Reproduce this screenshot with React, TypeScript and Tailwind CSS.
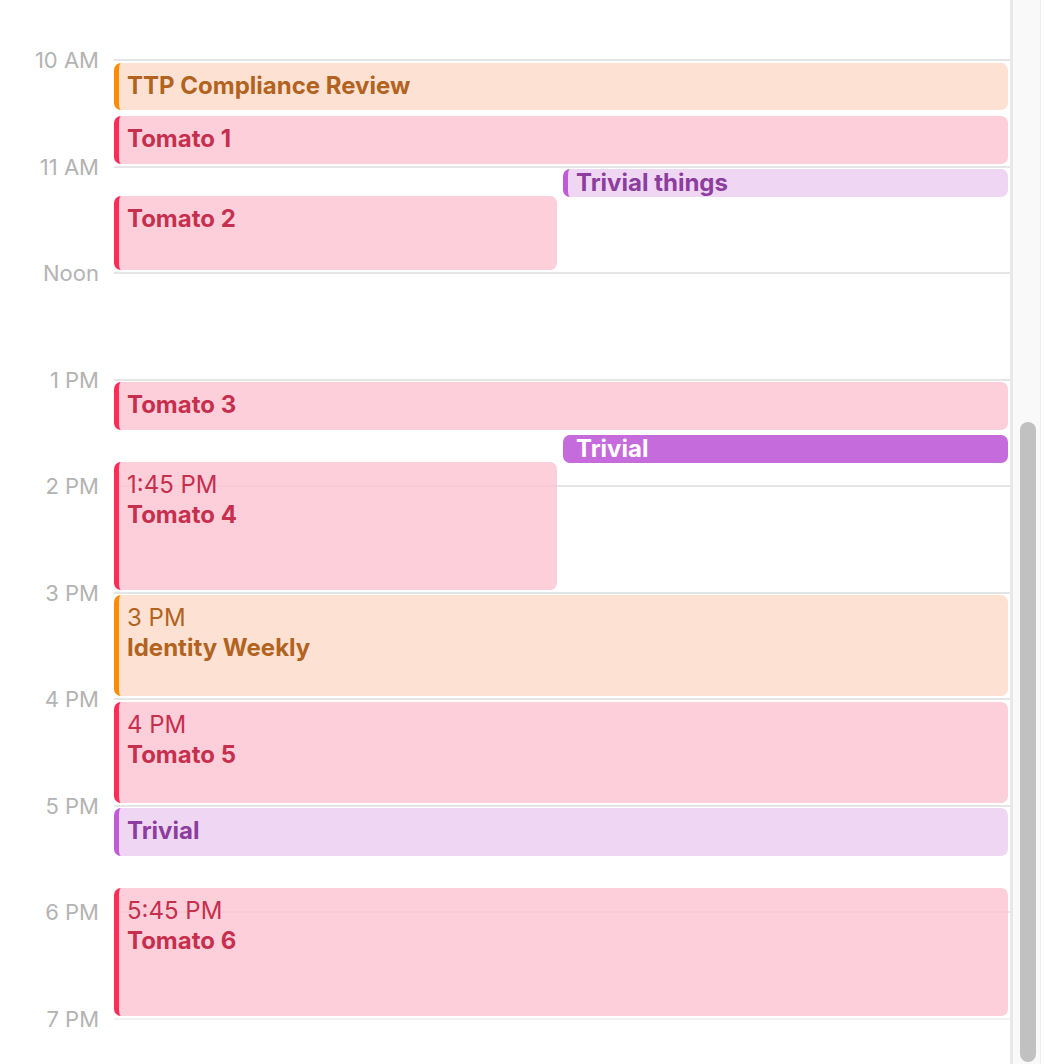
import React from 'react';

type Tone = 'orange' | 'pink' | 'lilac' | 'violet';

type CalEvent = {
  title: string;
  start: number;
  end: number;
  tone: Tone;
  col: 'full' | 'left' | 'right';
  showTime?: string;
};

const HOUR_PX = 106.5;
const FIRST_LINE = 59;
const lineY = (h: number) => FIRST_LINE + (h - 10) * HOUR_PX;

const HOURS = [
  { h: 10, label: '10 AM' },
  { h: 11, label: '11 AM' },
  { h: 12, label: 'Noon' },
  { h: 13, label: '1 PM' },
  { h: 14, label: '2 PM' },
  { h: 15, label: '3 PM' },
  { h: 16, label: '4 PM' },
  { h: 17, label: '5 PM' },
  { h: 18, label: '6 PM' },
  { h: 19, label: '7 PM' },
];

const EVENTS: CalEvent[] = [
  { title: 'TTP Compliance Review', start: 10, end: 10.5, tone: 'orange', col: 'full' },
  { title: 'Tomato 1', start: 10.5, end: 11, tone: 'pink', col: 'full' },
  { title: 'Trivial things', start: 11, end: 11.25, tone: 'lilac', col: 'right' },
  { title: 'Tomato 2', start: 11.25, end: 12, tone: 'pink', col: 'left' },
  { title: 'Tomato 3', start: 13, end: 13.5, tone: 'pink', col: 'full' },
  { title: 'Trivial', start: 13.5, end: 13.75, tone: 'violet', col: 'right' },
  { title: 'Tomato 4', start: 13.75, end: 15, tone: 'pink', col: 'left', showTime: '1:45 PM' },
  { title: 'Identity Weekly', start: 15, end: 16, tone: 'orange', col: 'full', showTime: '3 PM' },
  { title: 'Tomato 5', start: 16, end: 17, tone: 'pink', col: 'full', showTime: '4 PM' },
  { title: 'Trivial', start: 17, end: 17.5, tone: 'lilac', col: 'full' },
  { title: 'Tomato 6', start: 17.75, end: 19, tone: 'pink', col: 'full', showTime: '5:45 PM' },
];

const toneClass: Record<Tone, string> = {
  orange: 'bg-[#fde2d3] border-[#ff8c00] text-[#b2631f]',
  pink: 'bg-[#fcc3d1]/80 border-[#ff2d55] text-[#c6304f]',
  lilac: 'bg-[#efd7f3] border-[#bf5ad9] text-[#8c3d9e]',
  violet: 'bg-[#c56bdb] border-[#c56bdb] text-white',
};

const colPos = {
  full: { left: 114, width: 894 },
  left: { left: 114, width: 443 },
  right: { left: 563, width: 445 },
};

function EventBlock({ ev }: { ev: CalEvent }) {
  const top = lineY(ev.start) + 3.5;
  const bottom = lineY(ev.end) - 2;
  const height = Math.max(bottom - top, 28);
  const short = height < 40;
  const pos = colPos[ev.col];
  return (
    <div
      className={`absolute overflow-hidden rounded-[7px] border-l-[5px] pl-[8px] ${toneClass[ev.tone]} ${short ? 'pt-0' : 'pt-[8px]'}`}
      style={{ top, height, left: pos.left, width: pos.width }}
    >
      {ev.showTime && <div className="text-[24px] leading-[30px] font-normal">{ev.showTime}</div>}
      <div className={`text-[24px] font-bold ${short ? 'leading-[28px]' : 'leading-[30px]'}`}>{ev.title}</div>
    </div>
  );
}

export default function App() {
  return (
    <div className="flex h-[1064px] w-[1044px] overflow-hidden bg-white font-['Inter','Liberation_Sans',sans-serif]">
      <div className="relative w-[1010px]">
        <div className="h-[59px]" />
        {HOURS.map(({ h, label }) => (
          <div key={h} className="flex h-[106.5px]">
            <div className="w-[114px] shrink-0 pr-[15px] text-right">
              <span className="block -translate-y-[12px] text-[22px] leading-[26px] text-[#b3b3b3]">{label}</span>
            </div>
            <div className={`h-[2px] flex-1 ${h === 19 ? 'bg-[#f2f2f2]' : 'bg-[#e5e5e5]'}`} />
          </div>
        ))}
        {EVENTS.map((ev, i) => (
          <EventBlock key={i} ev={ev} />
        ))}
      </div>
      <div className="flex w-[34px] border-l-[3px] border-[#e8e8e8]">
        <div className="flex w-[27px] flex-col bg-[#f9f9f9] pl-[7px] pt-[422px] pb-[2px]">
          <div className="w-[16px] flex-1 rounded-full bg-[#c1c1c1]" />
        </div>
        <div className="w-[1px] bg-[#ececec]" />
        <div className="flex-1 bg-white" />
      </div>
    </div>
  );
}
